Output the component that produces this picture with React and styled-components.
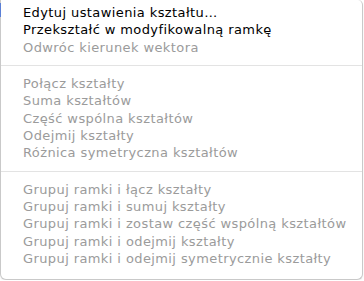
import styled, { createGlobalStyle } from "styled-components";

const Global = createGlobalStyle`
  html, body {
    margin: 0;
    padding: 0;
    background: #ffffff;
  }
  body {
    font-family: "DejaVu Sans", "Liberation Sans", sans-serif;
  }
`

const Menu = styled.div`
  position: relative;
  box-sizing: border-box;
  width: 363px;
  height: 280px;
  padding: 4px 0 0;
  background-color: #ffffff;
  border: 1px solid #c9c9c9;
  border-top: none;
  border-radius: 0 5px 6px 6px;
  box-shadow: 0 1px 2px rgba(0, 0, 0, 0.08);

  &::before {
    content: "";
    position: absolute;
    left: -1px;
    top: 3px;
    width: 1px;
    height: 14px;
    background: #5a7fd6;
  }
`

const Item = styled.div`
  height: 17.33px;
  line-height: 17.33px;
  padding-left: 22px;
  font-size: 13px;
  letter-spacing: 0.4px;
  white-space: nowrap;
  color: ${(p) => (p.$disabled ? "#9b9b9b" : "#000000")};
`

const Separator = styled.div`
  height: 19px;
  display: flex;
  align-items: center;

  &::after {
    content: "";
    flex: 1;
    height: 1px;
    background: #e3e3e3;
  }
`

const groups = [
  [
    ["Edytuj ustawienia kształtu…", false],
    ["Przekształć w modyfikowalną ramkę", false],
    ["Odwróc kierunek wektora", true],
  ],
  [
    ["Połącz kształty", true],
    ["Suma kształtów", true],
    ["Część wspólna kształtów", true],
    ["Odejmij kształty", true],
    ["Różnica symetryczna kształtów", true],
  ],
  [
    ["Grupuj ramki i łącz kształty", true],
    ["Grupuj ramki i sumuj kształty", true],
    ["Grupuj ramki i zostaw część wspólną kształtów", true],
    ["Grupuj ramki i odejmij kształty", true],
    ["Grupuj ramki i odejmij symetrycznie kształty", true],
  ],
];

export default function App() {
  return (
    <>
      <Global />
      <Menu>
        {groups.map((group, gi) => (
          <div key={gi}>
            {gi > 0 && <Separator />}
            {group.map(([label, disabled]) => (
              <Item key={label} $disabled={disabled}>
                {label}
              </Item>
            ))}
          </div>
        ))}
      </Menu>
    </>
  );
}
